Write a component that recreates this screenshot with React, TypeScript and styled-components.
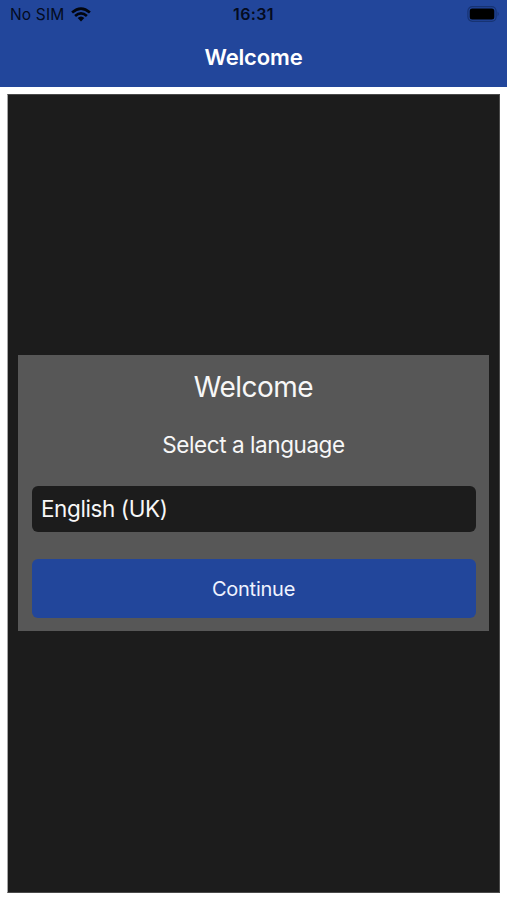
import React from "react";
import styled, { createGlobalStyle } from "styled-components";

const GlobalStyle = createGlobalStyle`
  * { box-sizing: border-box; }
  body { margin: 0; background: #fff; font-family: Inter, "Liberation Sans", sans-serif; }
`;

const Screen = styled.div`
  display: flex;
  flex-direction: column;
  width: 507px;
  height: 900px;
  overflow: hidden;
`;

const Header = styled.header`
  height: 87px;
  flex: none;
  background: #22469b;
`;

const StatusBar = styled.div`
  display: grid;
  grid-template-columns: 1fr auto 1fr;
  align-items: center;
  height: 29px;
  padding: 0 7px 0 10px;
  color: #040b20;
`;

const Carrier = styled.div`
  display: flex;
  align-items: center;
  gap: 7px;
`;

const Clock = styled.div`
  display: flex;
  margin-right: 3px;
`;

const Battery = styled.div`
  display: flex;
  justify-content: flex-end;
`;

const Label = styled.span<{ $size: number; $weight?: number; $spacing?: number }>`
  font-size: ${(p) => p.$size}px;
  font-weight: ${(p) => p.$weight ?? 400};
  letter-spacing: ${(p) => p.$spacing ?? 0}px;
  line-height: 1.2;
  white-space: nowrap;
`;

const CarrierLabel = styled(Label)`
  padding-top: 2px;
`;

const NavBar = styled.div`
  display: flex;
  justify-content: center;
  align-items: center;
  height: 57px;
  color: #fff;
`;

const Content = styled.main`
  flex: 1;
  display: flex;
  padding: 7px 7px 7px;
`;

const Backdrop = styled.div`
  flex: 1;
  display: flex;
  flex-direction: column;
  justify-content: center;
  padding: 0 10px 1px;
  background: #1c1c1c;
  border: 1px solid #4a4a4a;
  border-left-color: #a5a5a5;
`;

const Card = styled.section`
  display: flex;
  flex-direction: column;
  align-items: center;
  height: 276px;
  padding: 16px 13.5px 13px;
  background: #575757;
  color: #f7f7f7;
`;

const Row = styled.div<{ $height: number; $gap: number }>`
  display: flex;
  align-items: center;
  height: ${(p) => p.$height}px;
  margin-bottom: ${(p) => p.$gap}px;
`;

const Select = styled.button`
  width: 100%;
  height: 46px;
  margin: 0 0 27px;
  padding: 0 9.5px 2px;
  border: 0;
  border-radius: 6px;
  background: #1c1c1c;
  color: #f7f7f7;
  font-family: inherit;
  text-align: left;
`;

const Continue = styled.button`
  width: 100%;
  height: 59px;
  padding: 0;
  border: 0;
  border-radius: 6px;
  background: #22469b;
  color: #eff3ff;
  font-family: inherit;
`;

const WifiIcon = () => (
  <svg width="20" height="15" viewBox="0 0 20 15" fill="none" stroke="#02050e" strokeWidth="2.7">
    <path d="M1.1 5.5Q10 -2.3 18.9 5.5" />
    <path d="M4.1 8.9Q10 3.7 15.9 8.9" />
    <path d="M10 9.6Q12 9.6 13.3 11.1L10 14.5L6.7 11.1Q8 9.6 10 9.6Z" fill="#02050e" stroke="none" />
  </svg>
);

const BatteryIcon = () => (
  <svg width="33" height="17" viewBox="0 0 33 17">
    <rect x="0.9" y="0.7" width="28.2" height="14.6" rx="4.5" fill="none" stroke="#173373" strokeWidth="1.2" />
    <rect x="2.7" y="2.6" width="24.6" height="10.8" rx="2.5" fill="#000" />
    <path d="M30.6 5.6Q32.8 8 30.6 10.4Z" fill="#173373" />
  </svg>
);

export default function App() {
  return (
    <>
      <GlobalStyle />
      <Screen>
        <Header>
          <StatusBar>
            <Carrier>
              <CarrierLabel $size={15.5} $spacing={0.15}>No SIM</CarrierLabel>
              <WifiIcon />
            </Carrier>
            <Clock>
              <Label $size={16} $weight={600} $spacing={0.4}>16:31</Label>
            </Clock>
            <Battery>
              <BatteryIcon />
            </Battery>
          </StatusBar>
          <NavBar>
            <Label $size={22} $weight={600} $spacing={-0.15}>Welcome</Label>
          </NavBar>
        </Header>
        <Content>
          <Backdrop>
            <Card>
              <Row $height={34} $gap={22}>
                <Label $size={28} $spacing={-0.5}>Welcome</Label>
              </Row>
              <Row $height={34} $gap={25}>
                <Label $size={22.5} $spacing={-0.43}>Select a language</Label>
              </Row>
              <Select>
                <Label $size={22.5} $spacing={-0.4}>English (UK)</Label>
              </Select>
              <Continue>
                <Label $size={20} $spacing={-0.25}>Continue</Label>
              </Continue>
            </Card>
          </Backdrop>
        </Content>
      </Screen>
    </>
  );
}
